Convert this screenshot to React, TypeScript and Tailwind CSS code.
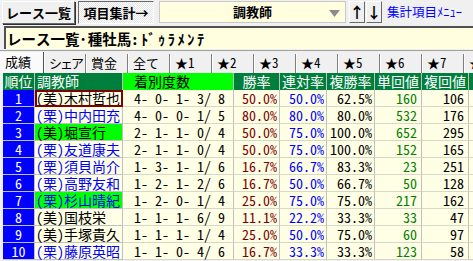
import React from 'react';

type Row = [number, string, string, string, string, string, string, string];

const rows: Row[] = [
  [1, '(美)木村哲也', '4- 0- 1- 3/ 8', '50.0%', '50.0%', '62.5%', '160', '106'],
  [2, '(栗)中内田充', '4- 0- 0- 1/ 5', '80.0%', '80.0%', '80.0%', '532', '176'],
  [3, '(美)堀宣行', '2- 1- 1- 0/ 4', '50.0%', '75.0%', '100.0%', '652', '295'],
  [4, '(栗)友道康夫', '2- 1- 1- 0/ 4', '50.0%', '75.0%', '100.0%', '152', '165'],
  [5, '(栗)須貝尚介', '1- 3- 1- 1/ 6', '16.7%', '66.7%', '83.3%', '23', '251'],
  [6, '(栗)高野友和', '1- 2- 1- 2/ 6', '16.7%', '50.0%', '66.7%', '50', '128'],
  [7, '(栗)杉山晴紀', '1- 2- 0- 1/ 4', '25.0%', '75.0%', '75.0%', '217', '162'],
  [8, '(美)国枝栄', '1- 1- 1- 6/ 9', '11.1%', '22.2%', '33.3%', '33', '47'],
  [9, '(美)手塚貴久', '1- 1- 1- 1/ 4', '25.0%', '50.0%', '75.0%', '60', '97'],
  [10, '(栗)藤原英昭', '1- 1- 0- 4/ 6', '16.7%', '33.3%', '33.3%', '123', '58'],
];

const tabs = ['成績', 'シェア', '賞金', '全て', '★1', '★2', '★3', '★4', '★5', '★6', '★7', '★8'];

const green = [3, 7];

const App: React.FC = () => {
  return (
    <div className="w-[473px] h-[261px] overflow-hidden bg-[#f0f0f0] text-black font-[family-name:'Noto_Sans_Mono_CJK_JP','Noto_Sans_CJK_JP',monospace] text-[14px] leading-[16px]">
      {/* top bar */}
      <div className="flex items-start h-[26px] pl-[2px] pt-[1px]">
        <button className="w-[73px] h-[23px] bg-[#f0f0f0] border border-t-white border-l-white border-r-[#696969] border-b-[#696969] shadow-[1px_1px_0_#303030] font-bold text-[13px] flex items-center justify-center">
          レース一覧
        </button>
        <button className="ml-[3px] w-[76px] h-[23px] border border-t-[#696969] border-l-[#696969] border-r-white border-b-white bg-[repeating-conic-gradient(#e4e4e4_0_25%,#ffffff_0_50%)] bg-[length:2px_2px] font-bold text-[13px] flex items-center justify-center">
          項目集計→
        </button>
        <div className="ml-[5px] w-[187px] h-[22px] bg-[#ffffe0] border border-[#c8c8c8] flex items-center relative">
          <span className="flex-1 text-center font-bold text-[13px]">調教師</span>
          <svg width="11" height="7" viewBox="0 0 11 7" className="absolute right-[5px] top-[8px]">
            <polygon points="0,0 11,0 5.5,7" fill="#8c8c8c" />
          </svg>
        </div>
        <button className="ml-[3px] w-[16px] h-[22px] bg-[#f0f0f0] border border-t-white border-l-white border-r-[#696969] border-b-[#696969] font-bold text-[15px] flex items-center justify-center">
          ↑
        </button>
        <button className="ml-px w-[16px] h-[22px] bg-[#f0f0f0] border border-t-white border-l-white border-r-[#696969] border-b-[#696969] font-bold text-[15px] flex items-center justify-center">
          ↓
        </button>
        <span className="ml-[5px] mt-[3px] text-[#0000ff] text-[12.5px] whitespace-nowrap">
          集計項目ﾒﾆｭｰ
        </span>
      </div>

      {/* title */}
      <div className="ml-[4px] h-[23px] bg-[#ffffe0] border-t-2 border-l-2 border-t-[#505050] border-l-[#505050] flex items-center pl-[1px] font-bold text-[14.5px] whitespace-nowrap">
        レース一覧<span className="tracking-[1px]">･</span>種牡馬<span className="tracking-[2.5px]">:ﾄﾞｩﾗﾒﾝﾃ</span>
      </div>
      <div className="h-[1px] bg-[#a0a0a0] mt-[1px]" />

      {/* tabs */}
      <div className="flex h-[22px] pt-[1px] whitespace-nowrap text-[13px]">
        {tabs.map((t, i) => (
          <div
            key={t}
            className={
              i === 0
                ? 'w-[44px] shrink-0 bg-[#fafafa] border-r border-r-[#505050] pl-[5px] pt-[2px]'
                : 'w-[42px] shrink-0 overflow-hidden bg-[#f0f0f0] border-l border-l-white border-r border-r-[#808080] mt-[2px] pl-[4px] pt-[1px]' +
                  (t === 'シェア' ? ' tracking-[-2px]' : '')
            }
          >
            {t}
          </div>
        ))}
      </div>

      {/* table */}
      <div className="pl-[3px] whitespace-nowrap">
        <div className="flex h-[17px] bg-[#007f3c] text-white">
          <div className="w-[32px] shrink-0 border-r border-r-[#c0c0c0] text-center">順位</div>
          <div className="w-[88px] shrink-0 border-r border-r-[#c0c0c0] pl-[2px]">調教師</div>
          <div className="w-[111px] shrink-0 border-r border-r-[#c0c0c0] bg-[#00ff00] text-black pl-[11px]">着別度数</div>
          <div className="w-[46px] shrink-0 border-r border-r-[#c0c0c0] text-center">勝率</div>
          <div className="w-[47px] shrink-0 border-r border-r-[#c0c0c0] text-center">連対率</div>
          <div className="w-[48px] shrink-0 border-r border-r-[#c0c0c0] text-center">複勝率</div>
          <div className="w-[47px] shrink-0 border-r border-r-[#c0c0c0] text-center">単回値</div>
          <div className="w-[47px] shrink-0 border-r border-r-[#c0c0c0] text-center">複回値</div>
          <div className="flex-1" />
        </div>
        {rows.map((r) => {
          const [n, name, stats, win, ren, fuku, tan, fkv] = r;
          const kuri = name.startsWith('(栗)');
          const hl = green.includes(n);
          return (
            <div key={n} className="flex h-[17px] bg-[#ffffe6]">
              <div className="w-[32px] shrink-0 bg-[#0000ff] text-white text-center border-r border-r-[#c0c0c0] border-b border-b-[#c0c0c0]">
                {n}
              </div>
              <div
                className={
                  'w-[88px] shrink-0 pl-[1px] border-r border-r-[#c0c0c0] border-b border-b-[#c0c0c0] ' +
                  (hl ? 'bg-[#00ff00] ' : '') +
                  (kuri ? 'text-[#0000ff] ' : 'text-black ') +
                  (n === 1 ? 'outline-2 outline-[#800000] -outline-offset-2' : '')
                }
              >
                {name}
              </div>
              <div className="w-[111px] shrink-0 pl-[11px] whitespace-pre border-r border-r-[#c0c0c0] border-b border-b-[#d8d8c8]">
                {stats}
              </div>
              <div className="w-[46px] shrink-0 text-right pr-[2px] text-[#800000] border-r border-r-[#c0c0c0] border-b border-b-[#d8d8c8]">
                {win}
              </div>
              <div className="w-[47px] shrink-0 text-right pr-[2px] text-[#0000ff] border-r border-r-[#c0c0c0] border-b border-b-[#d8d8c8]">
                {ren}
              </div>
              <div className="w-[48px] shrink-0 text-right pr-[2px] border-r border-r-[#c0c0c0] border-b border-b-[#d8d8c8]">
                {fuku}
              </div>
              <div className="w-[47px] shrink-0 text-right pr-[4px] text-[#008000] border-r border-r-[#c0c0c0] border-b border-b-[#d8d8c8]">
                {tan}
              </div>
              <div className="w-[47px] shrink-0 text-right pr-[4px] border-r border-r-[#c0c0c0] border-b border-b-[#d8d8c8]">
                {fkv}
              </div>
              <div className="flex-1 border-b border-b-[#d8d8c8]" />
            </div>
          );
        })}
      </div>
    </div>
  );
};

export default App;
